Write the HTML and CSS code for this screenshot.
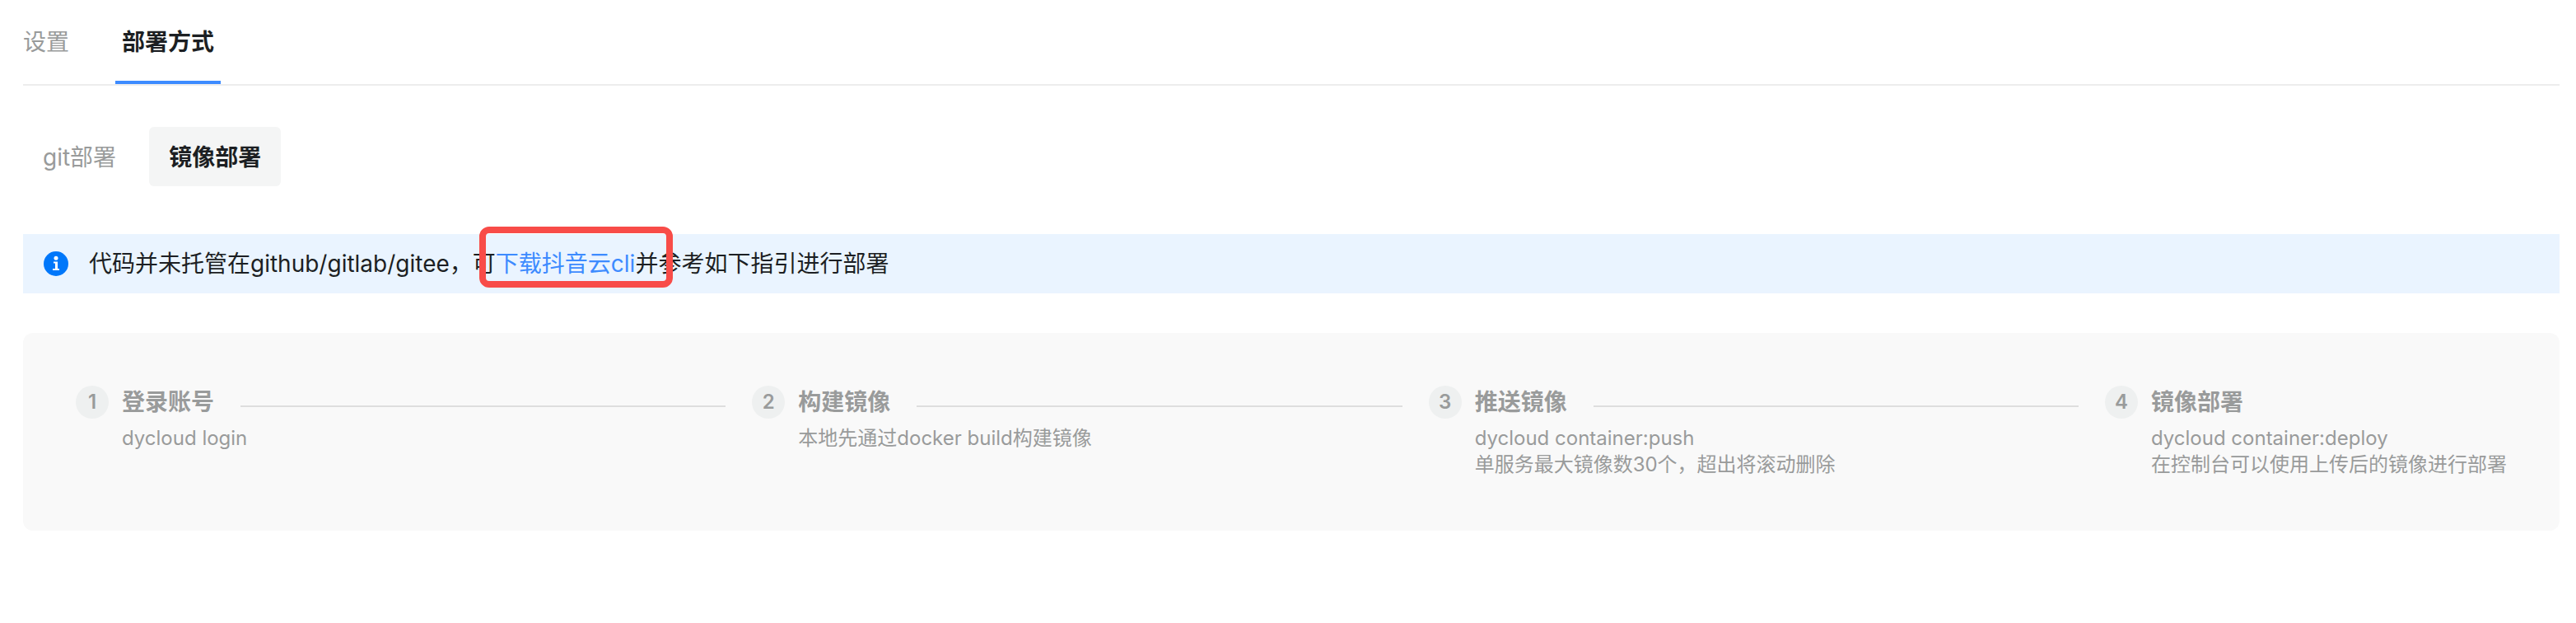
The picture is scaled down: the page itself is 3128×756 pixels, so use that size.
FILE: index.html
```html
<!DOCTYPE html>
<html lang="zh-CN">
<head>
    <meta charset="UTF-8">
    <title>部署方式</title>
    <link rel="stylesheet" href="styles.css">
</head>
<body>
    <nav class="tabs">
        <button type="button" class="tab">设置</button>
        <button type="button" class="tab active">部署方式</button>
    </nav>

    <div class="sub-tabs">
        <button type="button" class="sub-tab">git部署</button>
        <button type="button" class="sub-tab active">镜像部署</button>
    </div>

    <div class="banner">
        <svg class="banner-icon" viewBox="0 0 30 30" aria-hidden="true">
            <circle cx="15" cy="15" r="15" fill="#0077fa"/>
            <circle cx="15" cy="8.3" r="2.5" fill="#fff"/>
            <path d="M12 12.500h5v8.500h2v2h-8v-2h3v-6.500h-2z" fill="#fff"/>
        </svg>
        <p class="banner-text">代码并未托管在github/gitlab/gitee，可<a class="link" href="#">下载抖音云cli<span class="highlight"></span></a>并参考如下指引进行部署</p>
    </div>

    <ol class="steps">
        <li class="step">
            <span class="step-number">1</span>
            <div class="step-content">
                <h3 class="step-title">登录账号</h3>
                <p class="step-desc">dycloud login</p>
            </div>
        </li>
        <li class="step">
            <span class="step-number">2</span>
            <div class="step-content">
                <h3 class="step-title">构建镜像</h3>
                <p class="step-desc">本地先通过docker build构建镜像</p>
            </div>
        </li>
        <li class="step">
            <span class="step-number">3</span>
            <div class="step-content">
                <h3 class="step-title">推送镜像</h3>
                <p class="step-desc">dycloud container:push<br>单服务最大镜像数30个，超出将滚动删除</p>
            </div>
        </li>
        <li class="step">
            <span class="step-number">4</span>
            <div class="step-content">
                <h3 class="step-title">镜像部署</h3>
                <p class="step-desc">dycloud container:deploy<br>在控制台可以使用上传后的镜像进行部署</p>
            </div>
        </li>
    </ol>
</body>
</html>
```

FILE: styles.css
```css
* {
    box-sizing: border-box;
}
body {
    margin: 0;
    padding: 0 20px 0 28px;
    background: #fff;
    color: #1c1f23;
    font-family: Inter, "Noto Sans CJK SC", sans-serif;
    font-size: 28px;
    line-height: 40px;
}
button {
    border: 0;
    background: none;
    color: #999b9b;
    font: inherit;
    cursor: pointer;
}
h3, p, ol {
    margin: 0;
    padding: 0;
}

/* tabs */
.tabs {
    display: flex;
    gap: 48px;
    border-bottom: 2px solid #ededed;
}
.tab {
    padding: 31px 8px 27px;
    border-bottom: 4px solid transparent;
}
.tab:first-child {
    padding-left: 0;
}
.tab.active {
    border-bottom-color: #3d8bff;
    color: #1c1f23;
    font-weight: 600;
}
.sub-tabs {
    display: flex;
    gap: 16px;
    margin-top: 50px;
}
.sub-tab {
    padding: 17px 24px 15px;
    border-radius: 6px;
}
.sub-tab.active {
    background: #f4f5f5;
    color: #1c1f23;
    font-weight: 600;
}

/* banner */
.banner {
    display: flex;
    align-items: center;
    gap: 24px;
    margin-top: 58px;
    padding: 16px 24px;
    background: #eaf4ff;
}
.banner-icon {
    width: 32px;
    height: 30px;
}
.link {
    position: relative;
    color: #3d8bff;
    text-decoration: none;
}
.highlight {
    position: absolute;
    top: -28px;
    right: -46px;
    bottom: -12px;
    left: -20px;
    border: 8px solid #f84c48;
    border-radius: 12px;
    pointer-events: none;
}

/* steps */
.steps {
    display: flex;
    margin-top: 48px;
    padding: 64px;
    border-radius: 12px;
    background: #f9f9f9;
    color: #999b9b;
    list-style: none;
}
.step {
    display: flex;
    flex: 1;
    gap: 16px;
}
.step:last-child {
    flex: none;
}
.step-number {
    flex: none;
    width: 40px;
    height: 40px;
    border-radius: 50%;
    background: #eef0f0;
    font-size: 24px;
    font-weight: 600;
    text-align: center;
}
.step-content {
    flex: 1;
}
.step-title {
    display: flex;
    gap: 32px;
    margin-right: 32px;
    font-size: 28px;
    font-weight: 600;
}
.step:not(:last-child) .step-title::after {
    content: "";
    flex: 1;
    height: 2px;
    margin-top: 24px;
    background: #dedede;
}
.step-desc {
    margin-top: 8px;
    font-size: 24px;
    line-height: 32px;
}
```
